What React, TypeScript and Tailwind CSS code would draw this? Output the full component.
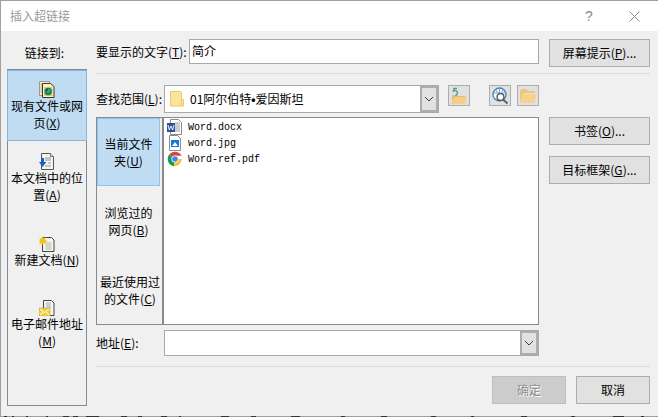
import React from "react";

const FONT = "font-['Noto_Sans_CJK_SC','Liberation_Sans',sans-serif]";

function Chevron() {
  return (
    <svg width="10" height="6" viewBox="0 0 10 6" fill="none" stroke="#404040" strokeWidth="1">
      <path d="M1 1l4 4 4-4" />
    </svg>
  );
}

function ExistingIcon() {
  return (
    <svg width="16" height="17" viewBox="0 0 16 17">
      <path d="M0.5 .5h10v14h-10z" fill="#f5eccf" stroke="#9a9a8c" />
      <path d="M1.5 3h2M1.5 5h2M1.5 7h2M1.5 9h2M1.5 11h2" stroke="#a8a890" />
      <path d="M3.5 2.5h8l3.5 3v11H3.5z" fill="#fbf3c8" stroke="#3a3a30" />
      <rect x="5" y="6" width="8.5" height="9" fill="#e8c94f" />
      <circle cx="9.2" cy="10.5" r="3.7" fill="#0d7f8c" />
      <path d="M7 9.5l3-1.500 1.500 2-2.500 2.500z" fill="#3dba4c" />
      <path d="M7.500 8l2 1-2.500 1z" fill="#0b2f55" />
    </svg>
  );
}

function PlaceIcon() {
  return (
    <svg width="16" height="17" viewBox="0 0 16 17">
      <path d="M2.5 .5h9l3 3v13h-12z" fill="#f6f4ea" stroke="#555" />
      <path d="M11.500 .5v3h3" fill="#ddd" stroke="#777" />
      <path d="M6 5h6M6 7h6M9 10h3M6 13h6" stroke="#8a9aa8" />
      <path d="M2 5h3v4h2.500L3.500 14 0 9h2z" fill="#1a5fc4" />
    </svg>
  );
}

function NewIcon() {
  return (
    <svg width="16" height="16" viewBox="0 0 16 16">
      <path d="M3.500 1.500h9l2.500 2.500v11.500H3.500z" fill="#f6f4ea" stroke="#444" />
      <path d="M6.500 7h6M6.500 9h6M6.500 11h6M6.500 13h6" stroke="#b5b5a8" />
      <path d="M3.500 0l1 2.500 2.500-1.500-1 3 2.500 1-2.500 1 1 2.500-3-1.500-1 2.500-1-2.500L0 9l1-3-1-1 1.500-1-1.500-2.500 2.500 1z" fill="#f0c419" />
    </svg>
  );
}

function MailIcon() {
  return (
    <svg width="16" height="16" viewBox="0 0 16 16">
      <path d="M4.500 .5h8l2.500 2.500v12.500h-10.500z" fill="#f5f5f0" stroke="#444" />
      <path d="M7 3h5M7 5h5M7 7h5" stroke="#aaa" />
      <rect x="0" y="8" width="11" height="8" fill="#f2d03b" stroke="#a99c5a" strokeWidth=".5" />
      <path d="M1 9l4.500 3.500L10 9M1 15l3-3M10 15l-3-3" stroke="#fff" strokeWidth="1" fill="none" />
    </svg>
  );
}

function FolderFlat() {
  return (
    <svg width="14" height="16" viewBox="0 0 14 16">
      <path d="M.5 .5h10l1 1v13.500H.5z" fill="#fbe49b" stroke="#eec95f" />
      <path d="M11.500 8.500h2V15h-2z" fill="#fbe49b" stroke="#eec95f" />
    </svg>
  );
}

function FolderUp() {
  return (
    <svg width="16" height="18" viewBox="0 0 16 18">
      <path d="M1 17V9l1-1h4l1 1h7l1 1v1H4z" fill="#e8b96a" />
      <path d="M0 17l3-7h13l-2 7z" fill="#f4cf8c" />
      <path d="M2 1.500h4M3.500 1.500L2.500 4c2.500-1 4 .5 4 2 0 1.500-1 2-2 2.500" fill="none" stroke="#54a08a" strokeWidth="1.400" />
    </svg>
  );
}

function GlobeSearch() {
  return (
    <svg width="17" height="18" viewBox="0 0 17 18">
      <circle cx="7.500" cy="7.500" r="6.500" fill="#fff" stroke="#4a80c0" strokeWidth="1.400" />
      <path d="M1.500 6h12M7.500 1v5M3.500 2.500l2 3M11.500 2.500l-2 3" stroke="#6d9bd0" />
      <circle cx="8.500" cy="10" r="3.400" fill="#fff" stroke="#555" strokeWidth="1.400" />
      <path d="M11 12.500l4.500 4" stroke="#666" strokeWidth="2.200" />
    </svg>
  );
}

function FolderOpen() {
  return (
    <svg width="17" height="14" viewBox="0 0 17 14">
      <path d="M0 14V2l1-2h5l2 2h7v2H4z" fill="#eec77f" />
      <path d="M0 14l3-9h14l-3 9z" fill="#f5d28e" />
    </svg>
  );
}

function WordIcon() {
  return (
    <svg width="16" height="16" viewBox="0 0 16 16">
      <path d="M3.500 .5h8l3 3v12h-11z" fill="#fff" stroke="#8a8a8a" />
      <path d="M8 4h5M8 6h5M8 8h5M8 10h5M8 12h5" stroke="#9a9a9a" />
      <rect x="0" y="4" width="8" height="9" fill="#2a5699" />
      <path d="M1 6l1.300 5 1.700-4 1.700 4L7 6" fill="none" stroke="#fff" strokeWidth=".9" />
    </svg>
  );
}

function ImageIcon() {
  return (
    <svg width="16" height="16" viewBox="0 0 16 16">
      <path d="M2.500 .5h8l3 3v12h-11z" fill="#fff" stroke="#8a8a8a" />
      <rect x="4" y="5" width="8" height="7" fill="#0f7bd6" />
      <path d="M5 11l3-4 3 4z" fill="#fff" />
    </svg>
  );
}

function ChromeIcon() {
  return (
    <svg width="16" height="16" viewBox="0 0 16 16">
      <path d="M8 8L2.200 3.600A7.300 7.300 0 0 1 14.600 4.800H8z" fill="#db4437" />
      <path d="M8 8L2.200 3.600A7.300 7.300 0 0 0 6.900 15.200z" fill="#0f9d58" />
      <path d="M8 8h6.600A7.300 7.300 0 0 1 6.900 15.200z" fill="#fbc02d" />
      <circle cx="8" cy="8" r="3.600" fill="#fff" />
      <circle cx="8" cy="8" r="2.800" fill="#4285f4" />
    </svg>
  );
}

function SideItem({
  icon,
  children,
  active,
  cls,
}: {
  icon: React.ReactNode;
  children: React.ReactNode;
  active?: boolean;
  cls: string;
}) {
  return (
    <div
      className={`${cls} flex flex-col items-center text-center leading-[17px] ${
        active ? "bg-[#bfdcf3] -mx-px border border-[#8ab6dc]" : ""
      }`}
    >
      <div className="h-[17px] flex items-center justify-center">{icon}</div>
      <div className="w-[76px] -mt-px">{children}</div>
    </div>
  );
}

function Btn({ children, className = "" }: { children: React.ReactNode; className?: string }) {
  return (
    <button className={`h-[28px] border border-[#adadad] bg-[#e1e1e1] text-center ${className}`}>
      {children}
    </button>
  );
}

function ToolBtn({ children }: { children: React.ReactNode }) {
  return (
    <div className="w-[22px] h-[21px] border border-[#adadad] bg-[#e1e1e1] flex items-center justify-center">
      {children}
    </div>
  );
}

function FileRow({ icon, name }: { icon: React.ReactNode; name: string }) {
  return (
    <div className="h-[16px] flex items-center gap-[5px]">
      <span className="w-[16px] h-[16px] shrink-0">{icon}</span>
      <span className="font-['Liberation_Mono',monospace] text-[10px] text-black">{name}</span>
    </div>
  );
}

function NavTab({
  children,
  active,
  h,
  extra = "",
}: {
  children: React.ReactNode;
  active?: boolean;
  h: string;
  extra?: string;
}) {
  return (
    <div
      className={`${h} ${extra} flex items-center justify-center text-center leading-[17px] whitespace-nowrap ${
        active ? "bg-[#bfdcf3] border border-[#8ec4ee]" : ""
      }`}
    >
      <div>{children}</div>
    </div>
  );
}

function DropBtn() {
  return (
    <span className="ml-auto w-[18px] h-full bg-[#e1e1e1] border-2 border-[#adadad] flex items-center justify-center">
      <Chevron />
    </span>
  );
}

const DASHES = "M3 .5h3M11 .5h2M25 .5h2M45 .5h2M62 .5h6M72 .5h5M85 .5h13M120 .5h6M137 .5h4M160 .5h6M178 .5h2M220 .5h8M250 .5h5M290 .5h9M340 .5h4M380 .5h6M430 .5h5M470 .5h3M520 .5h6M570 .5h4M612 .5h11M640 .5h3";

export default function App() {
  return (
    <div className={`${FONT} relative w-[658px] h-[417px] flex flex-col bg-[#f0f0f0] text-[12px] text-black border-t border-l border-b border-[#a0a0a0]`}>
      <div className="h-[30px] bg-white flex items-center pl-[9px] shrink-0">
        <span className="text-[#9a9a9a]">插入超链接</span>
        <span className="ml-auto w-[10px] text-center text-[#8a8a8a] mr-[35px] font-['Liberation_Sans'] text-[14px]">?</span>
        <svg className="mr-[18px]" width="11" height="11" viewBox="0 0 11 11" stroke="#8a8a8a" fill="none">
          <path d="M.5 .5l10 10M10.500 .5l-10 10" />
        </svg>
      </div>

      <div className="flex flex-1 min-h-0 pl-[6px] pr-[8px]">
        <div className="w-[80px] shrink-0 flex flex-col">
          <div className="h-[38px] flex items-center justify-center pt-[5px] pr-[5px]">链接到:</div>
          <div className="h-[337px] border border-[#868a91] flex flex-col">
            <SideItem active cls="h-[71px] pt-[10px]" icon={<ExistingIcon />}>
              现有文件或网页(<u>X</u>)
            </SideItem>
            <SideItem cls="h-[79px] pt-[12px]" icon={<PlaceIcon />}>
              本文档中的位置(<u>A</u>)
            </SideItem>
            <SideItem cls="h-[69px] pt-[15px]" icon={<NewIcon />}>
              新建文档(<u>N</u>)
            </SideItem>
            <SideItem cls="h-[70px] pt-[10px]" icon={<MailIcon />}>
              电子邮件地址(<u>M</u>)
            </SideItem>
          </div>
        </div>

        <div className="flex-1 ml-[9px] flex flex-col pt-[8px]">
          <div className="flex items-start h-[28px]">
            <div className="w-[93px] h-[25px] flex items-center whitespace-nowrap">要显示的文字(<u>T</u>):</div>
            <div className="w-[350px] h-[25px] border border-[#a9a9a9] bg-white pl-[2px] leading-[22px]">简介</div>
            <Btn className="ml-[10px] w-[101px]">屏幕提示(<u>P</u>)...</Btn>
          </div>
          <div className="h-px bg-[#dcdcdc] mt-[6px]" />

          <div className="flex items-start mt-[11px] h-[32px]">
            <div className="w-[68px] h-[28px] flex items-center whitespace-nowrap">查找范围(<u>L</u>):</div>
            <div className="w-[275px] h-[28px] border border-[#a9a9a9] bg-white flex items-center">
              <span className="ml-[5px]"><FolderFlat /></span>
              <span className="ml-[6px] whitespace-nowrap">
                01阿尔伯特<span className="font-['Liberation_Sans'] font-bold">•</span>爱因斯坦
              </span>
              <DropBtn />
            </div>
            <div className="ml-[9px]"><ToolBtn><FolderUp /></ToolBtn></div>
            <div className="ml-[19px]"><ToolBtn><GlobeSearch /></ToolBtn></div>
            <div className="ml-[6px]"><ToolBtn><FolderOpen /></ToolBtn></div>
          </div>

          <div className="flex items-start">
            <div className="w-[443px] h-[208px] flex border border-[#868a91]">
              <div className="w-[67px] shrink-0 border-r-2 border-r-[#868a91] pr-[2px] flex flex-col">
                <NavTab active h="h-[68px]">当前文件<br />夹(<u>U</u>)</NavTab>
                <NavTab h="h-[69px]">浏览过的<br />网页(<u>B</u>)</NavTab>
                <NavTab h="h-[69px]" extra="pl-[3px]">最近使用过<br />的文件(<u>C</u>)</NavTab>
              </div>
              <div className="flex-1 bg-white pl-[3px] pt-[1px]">
                <FileRow icon={<WordIcon />} name="Word.docx" />
                <FileRow icon={<ImageIcon />} name="word.jpg" />
                <FileRow icon={<ChromeIcon />} name="Word-ref.pdf" />
              </div>
            </div>
            <div className="ml-[10px] w-[101px] flex flex-col gap-[11px]">
              <Btn>书签(<u>O</u>)...</Btn>
              <Btn>目标框架(<u>G</u>)...</Btn>
            </div>
          </div>

          <div className="flex items-center mt-[5px] h-[26px] w-[443px]">
            <div className="w-[68px]">地址(<u>E</u>):</div>
            <div className="flex-1 h-[26px] border border-[#a9a9a9] bg-white flex justify-end">
              <DropBtn />
            </div>
          </div>

          <div className="h-px bg-[#dcdcdc] mt-[10px]" />

          <div className="flex justify-end gap-[10px] mt-[9px]">
            <Btn className="w-[74px] !bg-[#cccccc] !border-[#bfbfbf] text-[#8f8f8f] [text-shadow:1px_1px_0_#fff]">确定</Btn>
            <Btn className="w-[74px]">取消</Btn>
          </div>
        </div>
      </div>

      <svg className="absolute left-0 bottom-[-1px]" width="657" height="1" viewBox="0 0 657 1">
        <path d={DASHES} stroke="#333" strokeWidth="1" />
      </svg>
    </div>
  );
}
